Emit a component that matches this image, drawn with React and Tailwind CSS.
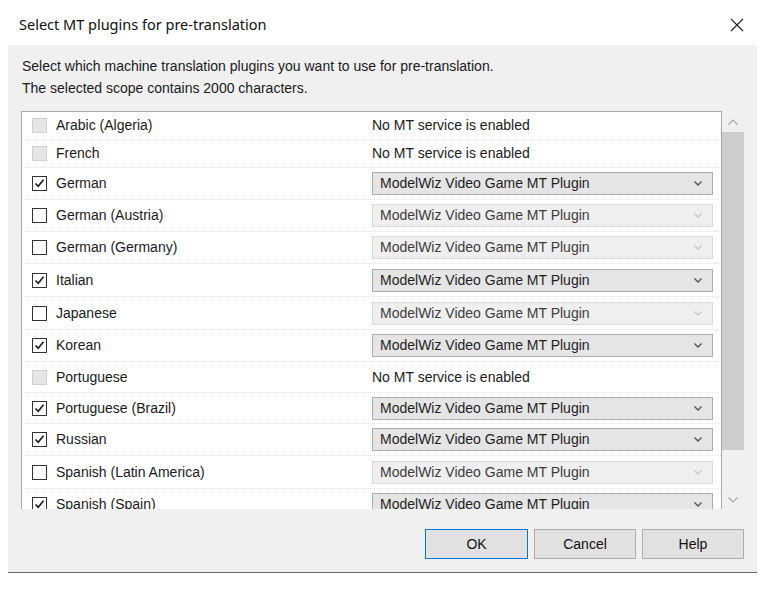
import React from 'react'

const rows = [
  { name: 'Arabic (Algeria)', state: 'off', mt: 'none', h: 'h-[28px]' },
  { name: 'French', state: 'off', mt: 'none', h: 'h-[28px]' },
  { name: 'German', state: 'checked', mt: 'on', h: 'h-[32px]' },
  { name: 'German (Austria)', state: 'empty', mt: 'dim', h: 'h-[32px]' },
  { name: 'German (Germany)', state: 'empty', mt: 'dim', h: 'h-[32px]' },
  { name: 'Italian', state: 'checked', mt: 'on', h: 'h-[33px]' },
  { name: 'Japanese', state: 'empty', mt: 'dim', h: 'h-[33px]' },
  { name: 'Korean', state: 'checked', mt: 'on', h: 'h-[32px]' },
  { name: 'Portuguese', state: 'off', mt: 'none', h: 'h-[31px]' },
  { name: 'Portuguese (Brazil)', state: 'checked', mt: 'on', h: 'h-[31px]' },
  { name: 'Russian', state: 'checked', mt: 'on', h: 'h-[32px]' },
  { name: 'Spanish (Latin America)', state: 'empty', mt: 'dim', h: 'h-[33px]' },
  { name: 'Spanish (Spain)', state: 'checked', mt: 'on', h: 'h-[32px]' },
]

const Check = ({ state }) => {
  if (state === 'off') {
    return <div className="w-[15px] h-[15px] shrink-0 border border-[#d0d0d0] bg-[#e6e6e6]" />
  }
  return (
    <div className="w-[15px] h-[15px] shrink-0 border border-[#333333] bg-white flex items-center justify-center">
      {state === 'checked' &&
        <svg width="11" height="11" viewBox="0 0 11 11">
          <path d="M1.5 5.5 L4.2 8.3 L9.5 1.8" fill="none" stroke="#1a1a1a" strokeWidth="1.6" />
        </svg>
      }
    </div>
  )
}

const Combo = ({ dim }) => (
  <div
    className={
      dim ?
        'w-[341px] h-[23px] shrink-0 border border-[#dadada] bg-[#efefef] flex items-center justify-between pl-[7px] pr-[10px] text-[#3c3c3c]' :
        'w-[341px] h-[23px] shrink-0 border border-[#adadad] bg-[#e5e5e5] flex items-center justify-between pl-[7px] pr-[10px] text-[#1e1e1e]'
    }
  >
    <span>ModelWiz Video Game MT Plugin</span>
    <svg width="8" height="5" viewBox="0 0 8 5">
      <path d="M0.5 0.5 L4 4 L7.5 0.5" fill="none" stroke={dim ? '#c6c6c6' : '#505050'} strokeWidth="1.3" />
    </svg>
  </div>
)

const Btn = ({ label, primary }) => (
  <div
    className={
      primary ?
        'w-[103px] h-[30px] border border-[#0078d7] bg-[#e1e1e1] flex items-center justify-center text-[14px] text-[#111]' :
        'w-[102px] h-[30px] border border-[#adadad] bg-[#e1e1e1] flex items-center justify-center text-[14px] text-[#111]'
    }
  >
    {label}
  </div>
)

export default function App() {
  return (
    <div className="w-[768px] h-[590px] bg-white overflow-hidden relative font-['Liberation_Sans',Arial,sans-serif]">
      {/* title bar */}
      <div className="h-[45px] flex items-center justify-between pl-[19px] pr-[24px]">
        <span className="font-['Noto_Sans',sans-serif] text-[14.5px] text-[#111] pt-[4px]">
          Select MT plugins for pre-translation
        </span>
        <svg width="14" height="14" viewBox="0 0 14 14" className="mt-[4px]">
          <path d="M1 1 L13 13 M13 1 L1 13" stroke="#222" strokeWidth="1.1" />
        </svg>
      </div>

      {/* body */}
      <div className="ml-[8px] w-[749px] h-[528px] bg-[#f0f0f0] border-b border-[#6a6a6a] flex flex-col">
        <div className="pl-[14px] pt-[10px] text-[14px] leading-[22px] text-[#1a1a1a]">
          <div>Select which machine translation plugins you want to use for pre-translation.</div>
          <div>The selected scope contains 2000 characters.</div>
        </div>

        <div className="mt-[12px] ml-[13px] flex h-[398px]">
          <div className="w-[701px] h-[398px] bg-white border-l border-t border-r border-[#a9a9a9] overflow-hidden text-[14px]">
            {rows.map(r => (
              <div
                key={r.name}
                className={`${r.h} flex items-center pl-[10px] border-b border-dotted border-[#e4e4e4]`}
              >
                <Check state={r.state} />
                <div className="w-[316px] shrink-0 ml-[9px] text-[#1a1a1a] whitespace-nowrap">{r.name}</div>
                {r.mt === 'none' ?
                  <div className="text-[#1a1a1a]">No MT service is enabled</div> :
                  <Combo dim={r.mt === 'dim'} />
                }
              </div>
            ))}
          </div>

          {/* scrollbar */}
          <div className="w-[22px] h-[398px] flex flex-col">
            <div className="h-[21px] flex items-center justify-center">
              <svg width="10" height="6" viewBox="0 0 10 6">
                <path d="M0.5 5.5 L5 1 L9.5 5.5" fill="none" stroke="#a6a6a6" strokeWidth="1.2" />
              </svg>
            </div>
            <div className="h-[318px] bg-[#cdcdcd]" />
            <div className="flex-1 flex items-end justify-center pb-[6px]">
              <svg width="10" height="6" viewBox="0 0 10 6">
                <path d="M0.5 0.5 L5 5 L9.5 0.5" fill="none" stroke="#a6a6a6" strokeWidth="1.2" />
              </svg>
            </div>
          </div>
        </div>

        <div className="mt-[20px] pr-[13px] flex justify-end gap-[6px]">
          <Btn label="OK" primary />
          <Btn label="Cancel" />
          <Btn label="Help" />
        </div>
      </div>
    </div>
  )
}
